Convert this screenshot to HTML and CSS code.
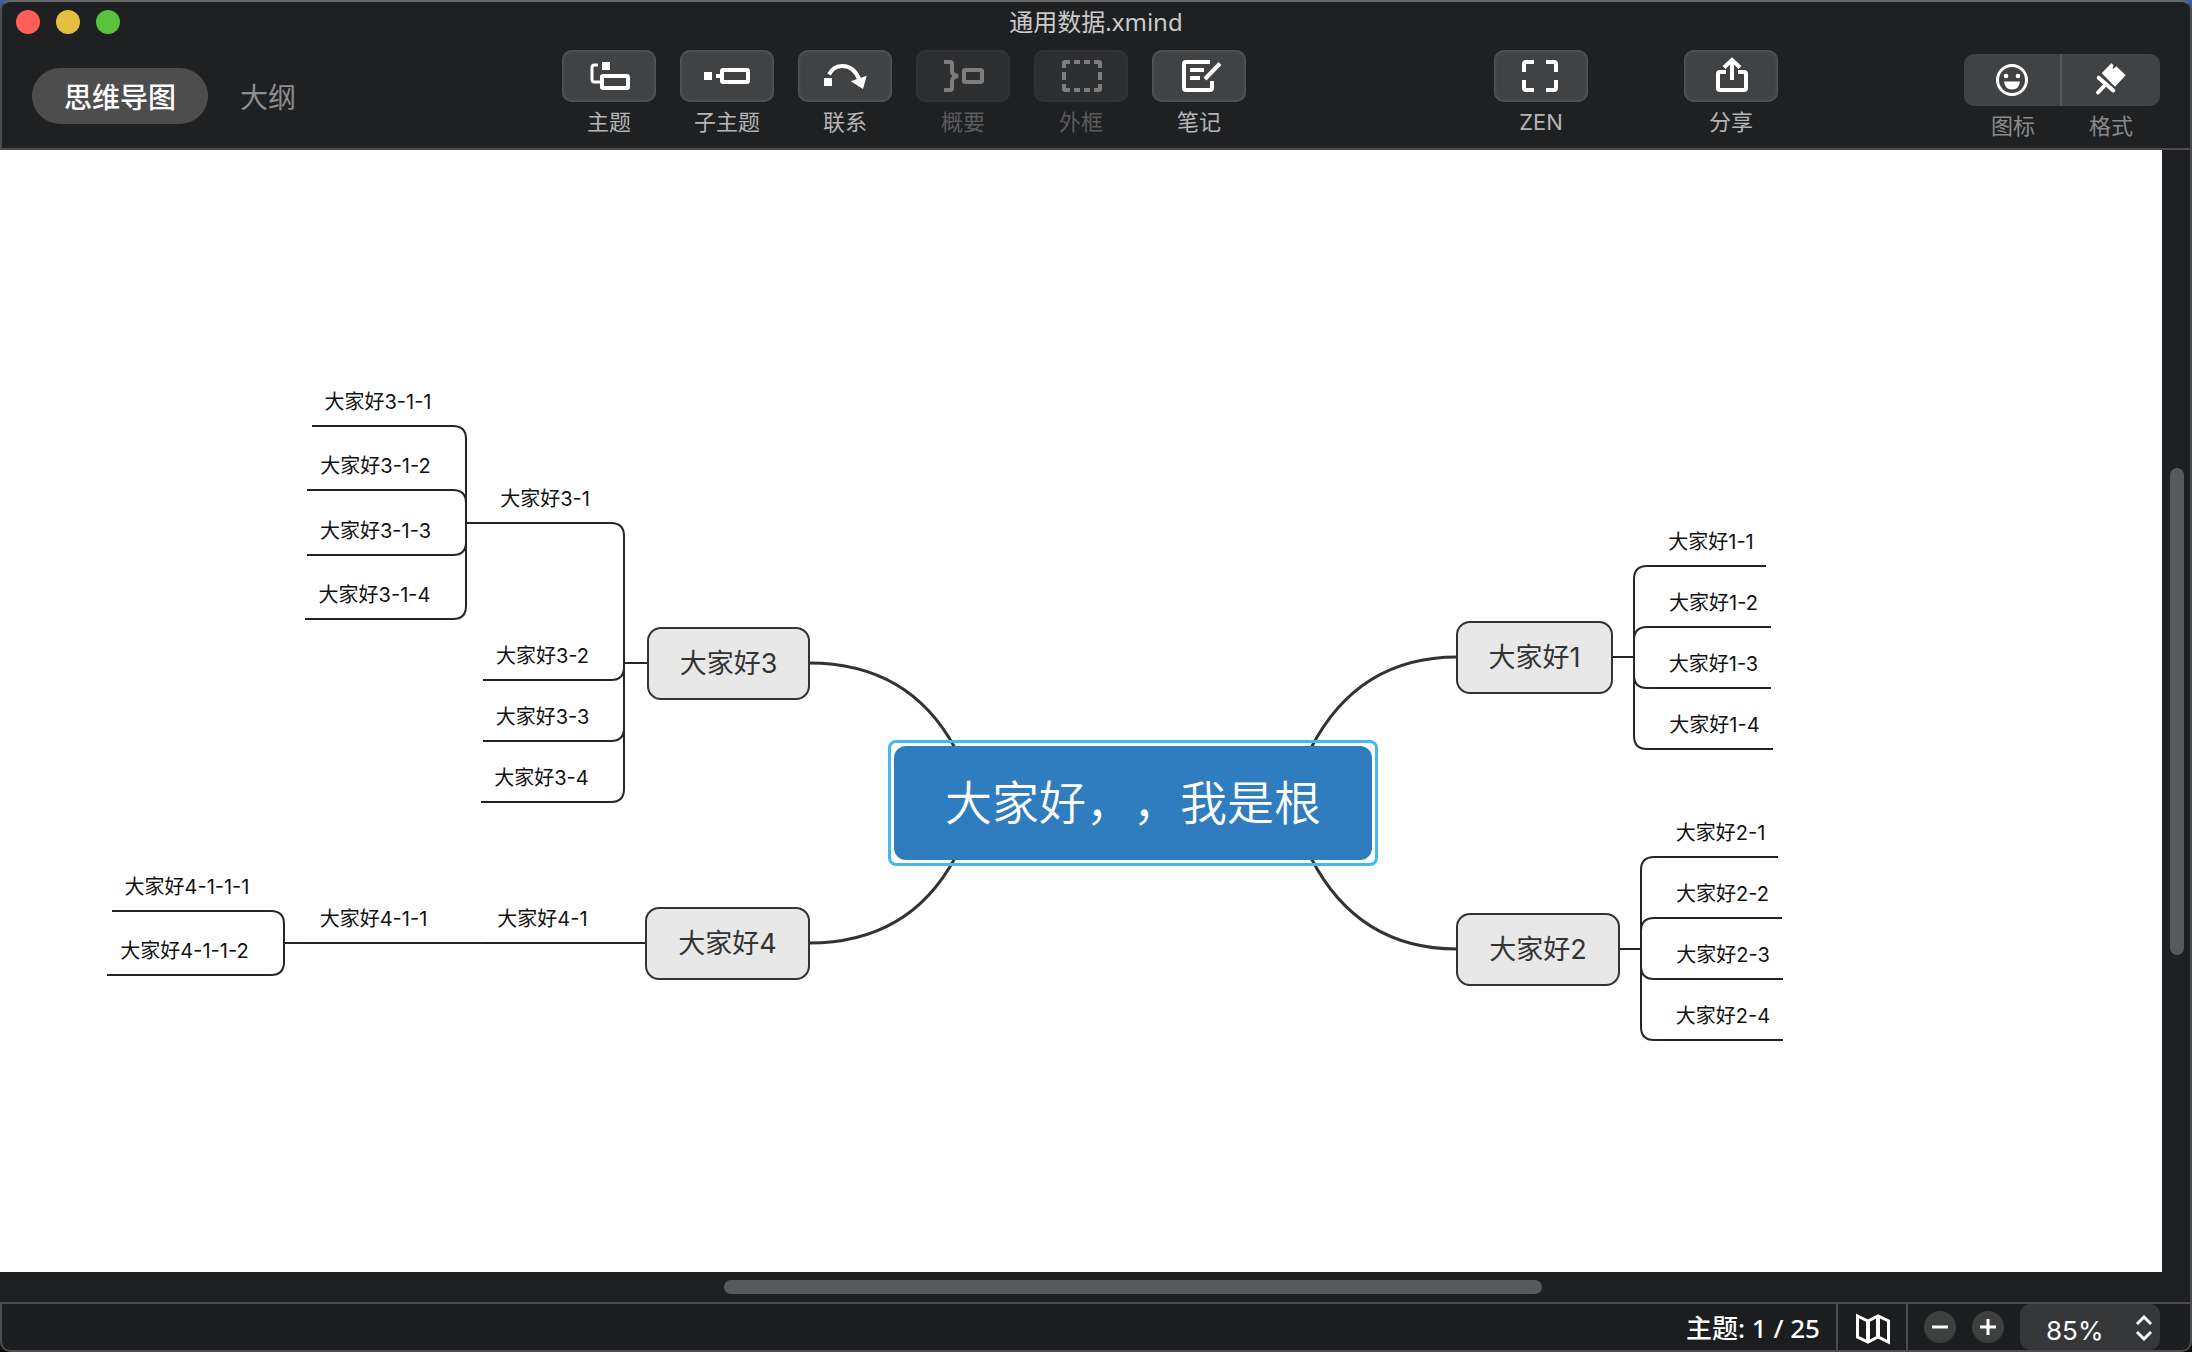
FILE: index.html
```
<!DOCTYPE html>
<html lang="zh-CN">
<head>
<meta charset="utf-8">
<title>通用数据.xmind</title>
<link rel="stylesheet" href="styles.css">
</head>
<body>
<div class="window">
  <header class="header">
    <div class="titlebar">
      <div class="lights">
        <button class="light light-close" aria-label="关闭"></button>
        <button class="light light-min" aria-label="最小化"></button>
        <button class="light light-full" aria-label="全屏"></button>
      </div>
      <h1 class="title">通用数据.xmind</h1>
    </div>
    <div class="toolbar">
      <nav class="tabs">
        <button class="tab tab-active">思维导图</button>
        <button class="tab">大纲</button>
      </nav>
      <div class="tools">
        <button class="tool"><span class="key"><svg class="icon" viewBox="0 0 94 52"><path class="thin" d="M36 15H32.500Q30 15 30 17.500V29.500Q30 32 32.500 32H39"/><path class="solid" d="M40 12h8v8h-8z"/><rect x="40" y="26" width="26" height="12" rx="1"/></svg></span><span class="label">主题</span></button>
        <button class="tool"><span class="key"><svg class="icon" viewBox="0 0 94 52"><path class="solid" d="M24 22h8v8h-8z"/><path d="M36 26h5"/><rect x="42" y="20" width="26" height="12" rx="1"/></svg></span><span class="label">子主题</span></button>
        <button class="tool"><span class="key"><svg class="icon" viewBox="0 0 94 52"><path class="solid" d="M26 28h8v8h-8zM52.700 31.300L68.700 25.700L65 39z"/><path d="M31 24.500C34 18.500 39 16 44.500 16C52 16 58 21 61.500 30"/></svg></span><span class="label">联系</span></button>
        <button class="tool" disabled><span class="key"><svg class="icon" viewBox="0 0 94 52"><path d="M28 12H34Q36 12 36 14V21Q36 25 42 26Q36 27 36 31V38Q36 40 34 40H28"/><rect x="48" y="20" width="18" height="12" rx="1"/></svg></span><span class="label">概要</span></button>
        <button class="tool" disabled><span class="key"><svg class="icon" viewBox="0 0 94 52"><path d="M30 18V13Q30 12 31 12H36M40 12h6M50 12h6M60 12H65Q66 12 66 13V18M66 22v8M66 34V39Q66 40 65 40H60M56 40h-6M46 40h-6M36 40H31Q30 40 30 39V34M30 30v-8"/></svg></span><span class="label">外框</span></button>
        <button class="tool"><span class="key"><svg class="icon" viewBox="0 0 94 52"><path d="M58 12H34Q32 12 32 14V38Q32 40 34 40H58Q60 40 60 38V31M38 20H52M38 28H48M68 13.500L53 29"/></svg></span><span class="label">笔记</span></button>
      </div>
      <button class="tool tool-zen"><span class="key"><svg class="icon" viewBox="0 0 94 52"><path d="M30 22V14Q30 12 32 12H40M52 12H60Q62 12 62 14V22M62 30V38Q62 40 60 40H52M40 40H32Q30 40 30 38V30"/></svg></span><span class="label">ZEN</span></button>
      <button class="tool tool-share"><span class="key"><svg class="icon" viewBox="0 0 94 52"><path d="M42 22H36Q34 22 34 24V38Q34 40 36 40H60Q62 40 62 38V24Q62 22 60 22H54M48 30V11M40 17.500L48 10L56 17.500"/></svg></span><span class="label">分享</span></button>
      <div class="panels">
        <button class="panel"><span class="key"><svg class="icon" viewBox="0 0 96 52"><circle class="thin" cx="48" cy="26" r="14.500"/><circle class="solid" cx="42" cy="22" r="2.300"/><circle class="solid" cx="54" cy="22" r="2.300"/><path class="solid" d="M40 27.500H56Q55 35.500 48 35.500Q41 35.500 40 27.500z"/></svg></span><span class="label">图标</span></button>
        <button class="panel"><span class="key"><svg class="icon" viewBox="0 0 98 52"><path class="solid" d="M39.700 19.300L49.300 9.300L51.500 11L50.700 15.300L54.300 12.300L63.700 21.300L53 32.700z"/><path class="round" d="M36.700 23.700L51.300 36.500M43.500 30.500L36 38.500"/></svg></span><span class="label">格式</span></button>
      </div>
    </div>
  </header>

  <main class="workspace">
    <div class="canvas">
      <svg class="links" aria-hidden="true">
        <g class="main-links">
          <path d="M809 513Q909 513 955 598"/>
          <path d="M809 793Q909 793 955 708"/>
          <path d="M1457 507Q1358 507 1311 598"/>
          <path d="M1457 799Q1358 799 1311 708"/>
        </g>
        <path d="M1612 507H1634M1656 416H1647Q1634 416 1634 429V586Q1634 599 1647 599H1656M1656 477H1647Q1634 477 1634 490V525Q1634 538 1647 538H1656"/>
        <path d="M1619 799H1641M1664 707H1654Q1641 707 1641 720V877Q1641 890 1654 890H1664M1664 768H1654Q1641 768 1641 781V816Q1641 829 1654 829H1664"/>
        <path d="M647 513H624M601 373H611Q624 373 624 386V639Q624 652 611 652H601M601 530H611Q624 530 624 517M601 591H611Q624 591 624 578"/>
        <path d="M443 276H453Q466 276 466 289V456Q466 469 453 469H443M443 340H453Q466 340 466 353V392Q466 405 453 405H443M466 373H490"/>
        <path d="M646 793H284M261 761H271Q284 761 284 774V812Q284 825 271 825H261"/>
      </svg>

      <div class="root" style="--x:888px;--y:590px;--w:490px"><span class="root-text">大家好，，我是根</span></div>

      <div class="branch" style="--x:1456px;--y:471px;--w:157px">大家好1</div>
      <div class="leaf" style="--x:1656px;--y:373px;--w:110px">大家好1-1</div>
      <div class="leaf" style="--x:1656px;--y:434px;--w:115px">大家好1-2</div>
      <div class="leaf" style="--x:1656px;--y:495px;--w:115px">大家好1-3</div>
      <div class="leaf" style="--x:1656px;--y:556px;--w:117px">大家好1-4</div>

      <div class="branch" style="--x:1456px;--y:763px;--w:164px">大家好2</div>
      <div class="leaf" style="--x:1663px;--y:664px;--w:115px">大家好2-1</div>
      <div class="leaf" style="--x:1663px;--y:725px;--w:119px">大家好2-2</div>
      <div class="leaf" style="--x:1663px;--y:786px;--w:120px">大家好2-3</div>
      <div class="leaf" style="--x:1663px;--y:847px;--w:120px">大家好2-4</div>

      <div class="branch" style="--x:647px;--y:477px;--w:163px">大家好3</div>
      <div class="leaf" style="--x:488px;--y:330px;--w:114px">大家好3-1</div>
      <div class="leaf" style="--x:312px;--y:233px;--w:132px">大家好3-1-1</div>
      <div class="leaf" style="--x:307px;--y:297px;--w:137px">大家好3-1-2</div>
      <div class="leaf" style="--x:307px;--y:362px;--w:137px">大家好3-1-3</div>
      <div class="leaf" style="--x:305px;--y:426px;--w:139px">大家好3-1-4</div>
      <div class="leaf" style="--x:483px;--y:487px;--w:119px">大家好3-2</div>
      <div class="leaf" style="--x:483px;--y:548px;--w:119px">大家好3-3</div>
      <div class="leaf" style="--x:481px;--y:609px;--w:121px">大家好3-4</div>

      <div class="branch" style="--x:645px;--y:757px;--w:165px">大家好4</div>
      <div class="leaf" style="--x:484px;--y:750px;--w:117px">大家好4-1</div>
      <div class="leaf" style="--x:307px;--y:750px;--w:133px">大家好4-1-1</div>
      <div class="leaf" style="--x:112px;--y:718px;--w:150px">大家好4-1-1-1</div>
      <div class="leaf" style="--x:107px;--y:782px;--w:155px">大家好4-1-1-2</div>
    </div>
    <div class="track track-v"><div class="thumb"></div></div>
    <div class="track track-h"><div class="thumb"></div></div>
    <div class="track-corner"></div>
  </main>

  <footer class="status">
    <span class="count">主题: 1 / 25</span>
    <button class="map-button" aria-label="导航图"><svg class="icon" viewBox="0 0 68 46"><path class="thin" d="M19.500 12L30 17L40 12L50.500 17V38L40 33L30 38L19.500 33z"/><path d="M30 17V38M40 12V33"/></svg></button>
    <div class="zoom">
      <button class="round-button" aria-label="缩小"><svg class="icon" viewBox="0 0 32 32"><path class="thin" d="M8 16H24"/></svg></button>
      <button class="round-button" aria-label="放大"><svg class="icon" viewBox="0 0 32 32"><path class="thin" d="M8 16H24M16 8V24"/></svg></button>
      <div class="level">
        <select class="level-select" aria-label="缩放比例"><option>85%</option><option>100%</option></select>
        <svg class="icon level-arrows" viewBox="0 0 20 28"><path class="thin" d="M3 10L10 3L17 10M3 18L10 25L17 18"/></svg>
      </div>
    </div>
  </footer>
</div>
</body>
</html>
```
FILE: styles.css
```
* {
  box-sizing: border-box;
}

body {
  margin: 0;
  background: linear-gradient(#3f5c9c 50%, #0a0a0b 50%);
  font-family: Inter, "Noto Sans CJK SC", sans-serif;
}

button {
  margin: 0;
  padding: 0;
  border: 0;
  background: none;
  color: inherit;
  font: inherit;
}

.window {
  display: flex;
  flex-direction: column;
  height: 100vh;
}

/* Title bar and toolbar */

.header {
  background: #1f2022;
  border: 2px solid #4c4c4e;
  border-top-color: #67686a;
  border-radius: 10px 10px 0 0;
}

.titlebar {
  display: grid;
  grid-template-columns: 1fr auto 1fr;
  align-items: center;
  height: 40px;
  padding: 0 14px;
}

.lights {
  display: flex;
  gap: 16px;
}

.light {
  width: 24px;
  height: 24px;
  border-radius: 50%;
}

.light-close { background: #ff5f58; }
.light-min { background: #e6bf3e; }
.light-full { background: #58c23a; }

.title {
  margin: 0;
  color: #cbcbcc;
  font-size: 24px;
  font-weight: 400;
  font-family: "Noto Sans", "Noto Sans CJK SC", sans-serif;
  line-height: 32px;
}

.toolbar {
  display: grid;
  grid-template-columns: 530fr auto 248fr auto 96fr auto 186fr auto;
  align-items: start;
  padding: 8px 30px 10px;
}

.tabs {
  display: flex;
  padding-top: 18px;
}

.tab {
  height: 56px;
  padding: 0 32px;
  border-radius: 28px;
  color: #8e8e8f;
  font-size: 28px;
}

.tab-active {
  background: #4d4d4d;
  color: #fff;
  font-weight: 500;
}

.tools {
  display: flex;
  gap: 24px;
}

.tool {
  display: flex;
  flex-direction: column;
  gap: 8px;
  width: 94px;
  color: #b5b5b6;
}

.tool-zen { grid-column: 4; }
.tool-share { grid-column: 6; }

.key {
  display: block;
  width: 100%;
  height: 52px;
  background: #414244;
  color: #fff;
}

.tool .key {
  border-radius: 10px;
  box-shadow: inset 0 0 3px 1px #5c5d5f;
}

.label {
  width: 100%;
  font-size: 22px;
  line-height: 24px;
  text-align: center;
}

.tool:disabled { color: #5b5b5d; }

.tool:disabled .key {
  background: #2d2e30;
  box-shadow: inset 0 0 3px 1px #363739;
  color: #7d7d7e;
}

.panels {
  display: flex;
  grid-column: 8;
  padding-top: 4px;
}

.panel {
  display: flex;
  flex-direction: column;
  gap: 8px;
  width: 98px;
  color: #8a8a8b;
}

.panel:first-child .key {
  border-right: 2px solid #56575a;
  border-radius: 10px 0 0 10px;
}

.panel:last-child .key { border-radius: 0 10px 10px 0; }

.icon {
  display: block;
  width: 100%;
  height: 100%;
  fill: none;
  stroke: currentColor;
  stroke-width: 4;
}

.icon .thin { stroke-width: 3; }

.icon .round { stroke-linecap: round; }

.icon .solid {
  fill: currentColor;
  stroke: none;
}

/* Mind map */

.workspace {
  display: grid;
  flex: 1;
  grid-template-columns: 1fr 30px;
  grid-template-rows: 1fr 30px;
  min-height: 0;
  background: #1f2022;
}

.canvas {
  position: relative;
  overflow: hidden;
  background: #fff;
}

.links {
  position: absolute;
  inset: 0;
  width: 100%;
  height: 100%;
  fill: none;
  stroke: #262626;
  stroke-width: 2;
}

.main-links {
  stroke: #333;
  stroke-width: 3;
}

.root,
.branch,
.leaf {
  position: absolute;
  left: var(--x);
  top: var(--y);
  width: var(--w);
  text-align: center;
  white-space: nowrap;
}

.root {
  padding: 3px;
  border: 3px solid #43b9f2;
  border-radius: 8px;
}

.root-text {
  display: block;
  border-radius: 12px;
  background: #2f7cbf;
  color: #fff;
  font-size: 47px;
  font-weight: 350;
  line-height: 114px;
  text-spacing-trim: space-all;
}

.branch {
  border: 2px solid #333;
  border-radius: 14px;
  background: #e8e8e8;
  color: #333;
  font-size: 27px;
  line-height: 69px;
}

.leaf {
  height: 44px;
  border-bottom: 2px solid #222;
  color: #111;
  font-size: 20px;
  line-height: 38px;
}

/* Scroll bars */

.track {
  display: grid;
  padding: 8px;
}

.track-v {
  grid-template-rows: 310fr 487fr 309fr;
  padding-right: 6px;
  border-right: 2px solid #4c4c4e;
}

.track-h { grid-template-columns: 716fr 818fr 612fr; }

.track-corner { border-right: 2px solid #4c4c4e; }

.thumb {
  border-radius: 7px;
  background: #58595a;
}

.track-v .thumb { grid-row: 2; }
.track-h .thumb { grid-column: 2; }

/* Status bar */

.status {
  display: flex;
  justify-content: flex-end;
  height: 50px;
  padding-right: 30px;
  border: 2px solid #4c4c4e;
  border-radius: 0 0 10px 10px;
  background: #1c1d1f;
  color: #fff;
  font-size: 26px;
  line-height: 46px;
}

.count {
  padding: 2px 16px 0 0;
  font-weight: 500;
  font-family: "Noto Sans", "Noto Sans CJK SC", sans-serif;
  line-height: 44px;
}

.map-button {
  width: 72px;
  border: solid #4c4c4e;
  border-width: 0 2px;
}

.zoom {
  display: flex;
  align-items: center;
  gap: 16px;
  padding-left: 16px;
}

.round-button {
  width: 32px;
  height: 32px;
  border-radius: 50%;
  background: #3e3f3f;
}

.level {
  position: relative;
}

.level-select {
  display: block;
  width: 140px;
  height: 46px;
  padding: 4px 0 0 26px;
  border: 0;
  border-radius: 10px;
  background: #363739;
  color: #fff;
  font: inherit;
  appearance: none;
}

.level-arrows {
  position: absolute;
  top: 10px;
  right: 6px;
  width: 20px;
  height: 28px;
  pointer-events: none;
}
```
